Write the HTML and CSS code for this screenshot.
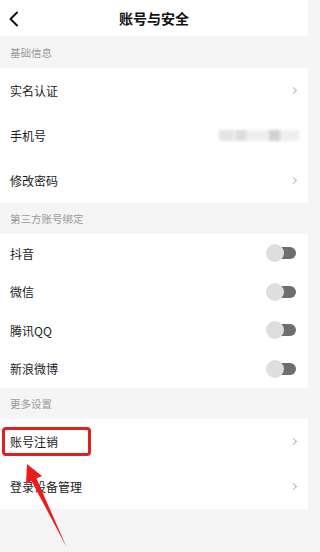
FILE: index.html
```html
<!DOCTYPE html>
<html lang="zh">
<head>
<meta charset="utf-8">
<link rel="stylesheet" href="styles.css">
</head>
<body>
<div class="page">
  <header class="topbar">
    <svg class="back" width="12" height="18" viewBox="0 0 12 18"><path d="M9 2.5 L2.5 9 L9 15.5" fill="none" stroke="#111" stroke-width="2" stroke-linecap="round" stroke-linejoin="round"/></svg>
    <div class="title">账号与安全</div>
  </header>

  <div class="section">基础信息</div>
  <div class="group">
    <div class="row"><span class="label">实名认证</span><span class="chev"></span></div>
    <div class="row"><span class="label">手机号</span><span class="phone"><i class="b1"></i><i class="b2"></i><i class="b3"></i></span></div>
    <div class="row"><span class="label">修改密码</span><span class="chev"></span></div>
  </div>

  <div class="section s2">第三方账号绑定</div>
  <div class="group">
    <div class="row short"><span class="label">抖音</span><span class="toggle"><i></i></span></div>
    <div class="row short"><span class="label">微信</span><span class="toggle"><i></i></span></div>
    <div class="row short"><span class="label">腾讯QQ</span><span class="toggle"><i></i></span></div>
    <div class="row short"><span class="label">新浪微博</span><span class="toggle"><i></i></span></div>
  </div>

  <div class="section s2">更多设置</div>
  <div class="group">
    <div class="row"><span class="label">账号注销</span><span class="chev"></span></div>
    <div class="row"><span class="label">登录设备管理</span><span class="chev"></span></div>
  </div>

  <div class="highlight"></div>
  <svg class="arrow" width="308" height="552" viewBox="0 0 308 552">
    <polygon points="27,464 42,476 36.5,478.5 66.5,547 31.5,481 26,484" fill="#ea1c1c"/>
  </svg>
</div>
</body>
</html>
```
FILE: styles.css
```css
* { box-sizing: border-box; margin: 0; padding: 0; }
html, body { width: 308px; height: 552px; overflow: hidden; }
body {
  background: #f5f5f5;
  font-family: "Noto Sans CJK SC", "Noto Sans", sans-serif;
  color: #1a1a1a;
}
.page { position: relative; width: 308px; height: 552px; }
.topbar {
  height: 36px;
  background: #fff;
  display: flex;
  align-items: center;
  justify-content: center;
  position: relative;
}
.back { position: absolute; left: 8px; top: 10px; }
.title { font-size: 14px; font-weight: 700; color: #111; }
.section {
  height: 32px;
  display: flex;
  align-items: center;
  padding-left: 10px;
  font-size: 10.5px;
  color: #9a9a9a;
}
.s2 { height: 31px; }
.group { background: #fff; }
.row {
  height: 45px;
  display: flex;
  align-items: center;
  justify-content: space-between;
  padding: 0 10px 0 10px;
}
.row.short { height: 38.5px; }
.label { font-size: 12px; color: #1c1c1c; }
.chev {
  width: 5px; height: 5px;
  border-top: 1.2px solid #b8b8b8;
  border-right: 1.2px solid #b8b8b8;
  transform: rotate(45deg);
  margin-right: 2px;
}
.phone {
  position: relative;
  width: 80px; height: 11px;
  margin-right: -1px;
  background: #efefef;
  filter: blur(1.5px);
}
.phone i { position: absolute; top: 0; height: 11px; display: block; }
.phone .b1 { left: 0; width: 14px; background: #e4e4e4; }
.phone .b2 { left: 17px; width: 10px; background: #dcdcdc; }
.phone .b3 { left: 50px; width: 11px; background: #d2d2d2; }
.toggle {
  position: relative;
  width: 30px; height: 18px;
  margin-right: 2px;
}
.toggle::before {
  content: "";
  position: absolute;
  left: 6px; right: 0; top: 3px; height: 12px;
  border-radius: 6px;
  background: #6e6e72;
}
.toggle i {
  position: absolute;
  left: 0; top: 0;
  width: 18px; height: 18px;
  border-radius: 50%;
  background: #dedede;
}
.highlight {
  position: absolute;
  left: 2px; top: 427px;
  width: 89px; height: 29px;
  border: 3px solid #e01f1f;
  border-radius: 4px;
}
.arrow { position: absolute; left: 0; top: 0; pointer-events: none; }
```
